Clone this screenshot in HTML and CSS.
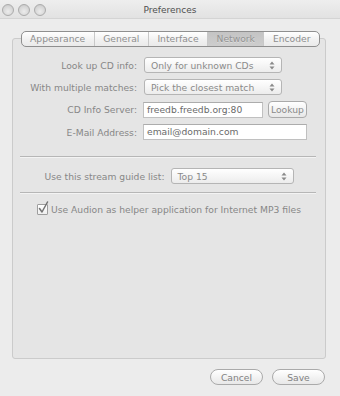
FILE: index.html
```html
<!DOCTYPE html>
<html>
<head>
<meta charset="utf-8">
<link rel="stylesheet" href="styles.css">
</head>
<body>
<div class="window">
  <div class="titlebar">
    <div class="lights">
      <span class="light"></span><span class="light"></span><span class="light"></span>
    </div>
    <div class="title">Preferences</div>
    <div></div>
  </div>

  <div class="tabs">
    <span class="tab first">Appearance</span>
    <span class="tab">General</span>
    <span class="tab">Interface</span>
    <span class="tab selected">Network</span>
    <span class="tab last">Encoder</span>
  </div>

  <div class="box">
    <div class="form">
      <label class="label">Look up CD info:</label>
      <div class="popup wide">
        <span>Only for unknown CDs</span>
        <svg class="arrows" width="6" height="9" viewBox="0 0 6 9"><path d="M3 0.5L5.5 3.5H0.5Z M3 8.5L5.5 5.5H0.5Z" fill="#8a8a8a"/></svg>
      </div>

      <label class="label">With multiple matches:</label>
      <div class="popup wide">
        <span>Pick the closest match</span>
        <svg class="arrows" width="6" height="9" viewBox="0 0 6 9"><path d="M3 0.5L5.5 3.5H0.5Z M3 8.5L5.5 5.5H0.5Z" fill="#8a8a8a"/></svg>
      </div>

      <label class="label">CD Info Server:</label>
      <div class="inline">
        <div class="field server">freedb.freedb.org:80</div>
        <div class="button small">Lookup</div>
      </div>

      <label class="label">E-Mail Address:</label>
      <div class="field email">email@domain.com</div>
    </div>

    <div class="sep first-sep"></div>

    <div class="stream">
      <span class="label">Use this stream guide list:</span>
      <div class="popup stream-popup">
        <span>Top 15</span>
        <svg class="arrows" width="6" height="9" viewBox="0 0 6 9"><path d="M3 0.5L5.5 3.5H0.5Z M3 8.5L5.5 5.5H0.5Z" fill="#8a8a8a"/></svg>
      </div>
    </div>

    <div class="sep second-sep"></div>

    <div class="check">
      <span class="checkbox">
        <svg width="12" height="13" viewBox="0 0 12 13"><path d="M2.5 7.5L5 11L10.5 1" fill="none" stroke="#737373" stroke-width="1.5" stroke-linecap="round" stroke-linejoin="round"/></svg>
      </span>
      <span class="check-text">Use Audion as helper application for Internet MP3 files</span>
    </div>
  </div>

  <div class="footer">
    <div class="button pill">Cancel</div>
    <div class="button pill">Save</div>
  </div>
</div>
</body>
</html>
```

FILE: styles.css
```css
html, body {
  margin: 0;
  padding: 0;
}
body {
  width: 340px;
  height: 396px;
  overflow: hidden;
  background: #ececec;
  font-family: "DejaVu Sans", "Liberation Sans", sans-serif;
  font-size: 9.2px;
  color: #8a8a8a;
}
.window {
  width: 340px;
  height: 396px;
  display: flex;
  flex-direction: column;
}
.titlebar {
  height: 18px;
  display: grid;
  grid-template-columns: 1fr auto 1fr;
  align-items: center;
  background: linear-gradient(#eeeeee, #e2e2e2);
  border-bottom: 1px solid #d4d4d4;
}
.lights {
  display: flex;
  gap: 4px;
  padding-left: 2px;
  padding-top: 1px;
}
.light {
  width: 10px;
  height: 10px;
  border-radius: 50%;
  border: 1px solid #ababab;
  background: radial-gradient(circle at 50% 65%, #ececec 0%, #d6d6d6 60%, #c0c0c0 100%);
}
.title {
  font-size: 9px;
  color: #505050;
  padding-top: 1px;
}
.tabs {
  align-self: center;
  margin-top: 12px;
  margin-bottom: -9px;
  position: relative;
  z-index: 1;
  display: flex;
  height: 14px;
  border: 1px solid #8f8f8f;
  border-radius: 5px;
  overflow: hidden;
  background: linear-gradient(#ffffff, #f1f1f1 55%, #eaeaea);
  margin-left: 1px;
}
.tab {
  padding: 0 8.5px;
  line-height: 14px;
  color: #8e8e8e;
  border-left: 1px solid #c8c8c8;
}
.tab.first {
  border-left: none;
  padding-left: 8px;
}
.tab.selected {
  background: linear-gradient(#c4c4c4, #cdcdcd);
  color: #929292;
  text-shadow: 0 1px 0 #dedede;
}
.box {
  margin-left: 12px;
  width: 314px;
  height: 321px;
  box-sizing: border-box;
  border: 1px solid #cbcbcb;
  border-radius: 3px;
  background: #e5e5e5;
  padding-top: 18px;
}
.form {
  display: grid;
  grid-template-columns: 124px auto;
  column-gap: 6px;
  row-gap: 6px;
  align-items: center;
}
.label {
  text-align: right;
  color: #878787;
  white-space: nowrap;
}
.popup {
  box-sizing: border-box;
  height: 16px;
  border: 1px solid #b5b5b5;
  border-radius: 3px;
  background: linear-gradient(#ffffff, #f4f4f4 60%, #ececec);
  display: flex;
  align-items: center;
  justify-content: space-between;
  padding: 0 6px 0 6px;
  color: #8a8a8a;
}
.popup.wide {
  width: 138px;
  margin-left: 1px;
}
.arrows {
  display: block;
}
.inline {
  display: flex;
  align-items: center;
  gap: 5px;
}
.field {
  box-sizing: border-box;
  height: 16px;
  background: #ffffff;
  border: 1px solid #c0c0c0;
  border-top-color: #acacac;
  padding: 0 3px;
  line-height: 14px;
  color: #6a6a6a;
}
.field.server {
  width: 120px;
}
.field.email {
  width: 164px;
}
.button {
  box-sizing: border-box;
  display: flex;
  align-items: center;
  justify-content: center;
  border: 1px solid #aaaaaa;
  background: linear-gradient(#ffffff, #f2f2f2 55%, #e8e8e8);
  color: #8a8a8a;
}
.button.small {
  width: 39px;
  height: 17px;
  border-radius: 4px;
}
.sep {
  height: 1px;
  background: #b6b6b6;
  border-bottom: 1px solid #f3f3f3;
  margin-left: 7px;
  margin-right: 9px;
}
.first-sep {
  margin-top: 16px;
}
.stream {
  margin-top: 10px;
  display: flex;
  justify-content: center;
  align-items: center;
  gap: 6px;
}
.stream-popup {
  width: 123px;
}
.second-sep {
  margin-top: 8px;
}
.check {
  margin-top: 10px;
  display: flex;
  justify-content: center;
  align-items: center;
  gap: 3px;
}
.checkbox {
  position: relative;
  width: 9px;
  height: 9px;
  border: 1px solid #9e9e9e;
  background: linear-gradient(#ffffff, #efefef);
  border-radius: 1px;
}
.checkbox svg {
  position: absolute;
  left: -1px;
  top: -4px;
}
.check-text {
  color: #878787;
}
.footer {
  display: flex;
  justify-content: flex-end;
  gap: 9px;
  margin-top: 10px;
  padding-right: 15px;
}
.button.pill {
  width: 53px;
  height: 16px;
  border-radius: 8px;
  color: #828282;
}
```
